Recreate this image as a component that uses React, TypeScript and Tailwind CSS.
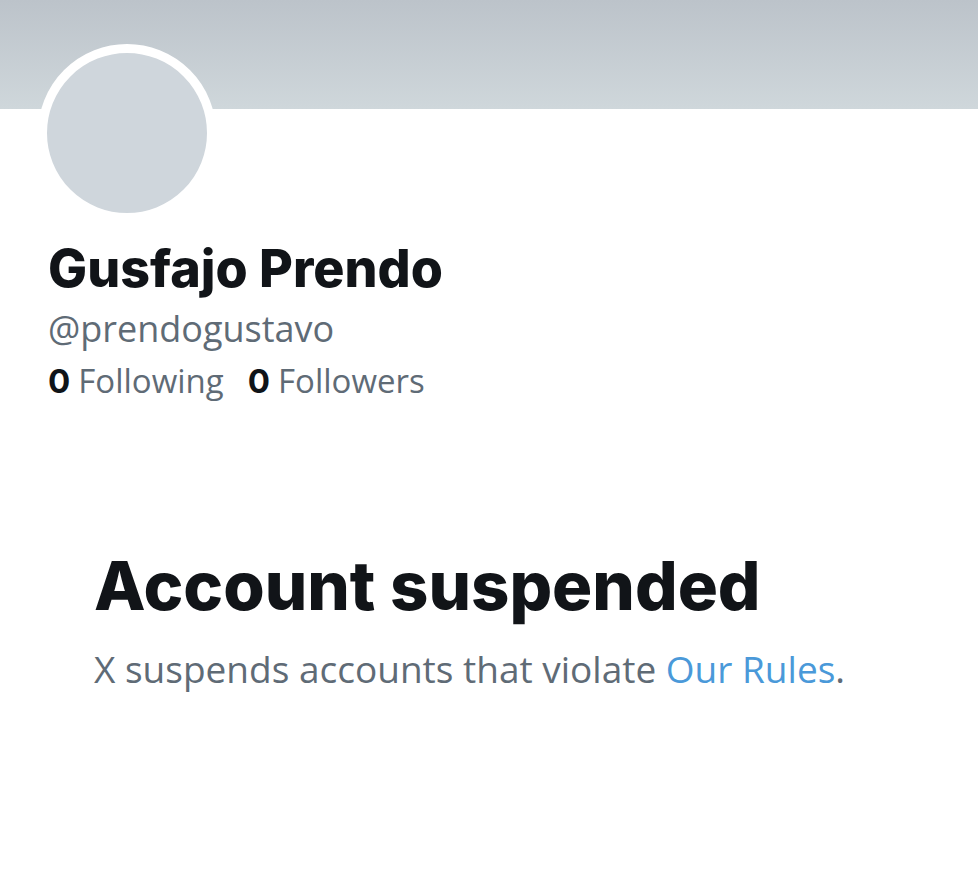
import React from "react";

const profile = {
  name: "Gusfajo Prendo",
  handle: "@prendogustavo",
  following: 0,
  followers: 0,
};

function Stat({ count, label }: { count: number; label: string }) {
  return (
    <a href="#" className="flex gap-2">
      <span className="font-['Inter',sans-serif] font-bold text-[#0f1419]">
        {count}
      </span>
      <span>{label}</span>
    </a>
  );
}

function ProfileHeader() {
  return (
    <header>
      <div className="h-[109px] bg-linear-to-b from-[#bcc3ca] to-[#cfd7db]" />
      <div className="px-12">
        <div className="-mt-[65px] -ml-[10px] size-[178px] rounded-full border-[9px] border-white bg-[#cfd6dc]" />
        <h1 className="mt-4 font-['Inter',sans-serif] text-[52px] leading-[62px] font-extrabold text-[#111418]">
          {profile.name}
        </h1>
        <p className="mt-1 text-[36px] leading-[50px]">{profile.handle}</p>
        <div className="flex gap-6 text-[33px] leading-[54px]">
          <Stat count={profile.following} label="Following" />
          <Stat count={profile.followers} label="Followers" />
        </div>
      </div>
    </header>
  );
}

function SuspendedNotice() {
  return (
    <main className="mt-[136px] px-[94px]">
      <h2 className="font-['Inter',sans-serif] text-[67px] leading-[84px] font-extrabold text-[#111418]">
        Account suspended
      </h2>
      <p className="mt-4 text-[37px] leading-[50px]">
        X suspends accounts that violate{" "}
        <a href="#" className="text-[#4a99d9]">
          Our Rules
        </a>
        .
      </p>
    </main>
  );
}

export default function App() {
  return (
    <div className="min-h-screen bg-white pb-16 font-['Open_Sans',sans-serif] text-[#5f6b76]">
      <ProfileHeader />
      <SuspendedNotice />
    </div>
  );
}
